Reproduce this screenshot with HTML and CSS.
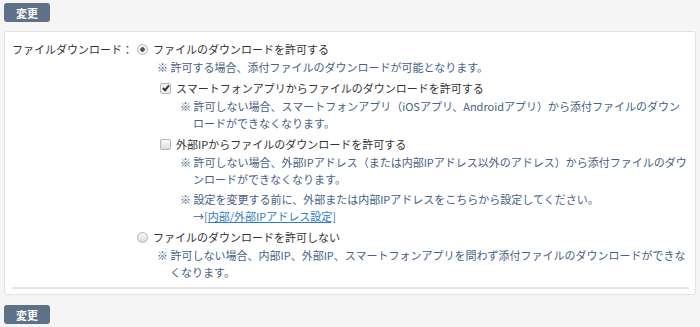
FILE: index.html
```html
<!DOCTYPE html>
<html lang="ja">
<head>
  <meta charset="UTF-8" />
  <title>ファイルダウンロード設定</title>
  <link rel="stylesheet" href="styles.css">
</head>
<body>
  <div class="actions">
    <button class="btn">変更</button>
  </div>

  <div class="panel">
    <div class="field">
      <div class="field-label">ファイルダウンロード：</div>
      <div class="field-body">
        <label class="opt"><span class="radio checked"></span>ファイルのダウンロードを許可する</label>
        <p class="note">※ 許可する場合、添付ファイルのダウンロードが可能となります。</p>

        <div class="sub">
          <label class="opt"><span class="check checked"></span>スマートフォンアプリからファイルのダウンロードを許可する</label>
          <p class="note">※ 許可しない場合、スマートフォンアプリ（iOSアプリ、Androidアプリ）から添付ファイルのダウンロードができなくなります。</p>

          <label class="opt"><span class="check"></span>外部IPからファイルのダウンロードを許可する</label>
          <p class="note">※ 許可しない場合、外部IPアドレス（または内部IPアドレス以外のアドレス）から添付ファイルのダウンロードができなくなります。</p>
          <p class="note">※ 設定を変更する前に、外部または内部IPアドレスをこちらから設定してください。<br>→<a href="#">[内部/外部IPアドレス設定]</a></p>
        </div>

        <label class="opt"><span class="radio"></span>ファイルのダウンロードを許可しない</label>
        <p class="note">※ 許可しない場合、内部IP、外部IP、スマートフォンアプリを問わず添付ファイルのダウンロードができなくなります。</p>
      </div>
    </div>
    <hr class="rule">
  </div>

  <div class="actions">
    <button class="btn">変更</button>
  </div>
</body>
</html>
```

FILE: styles.css
```css
body {
  margin: 0;
  padding: 3px 4px;
  background: #f5f5f5;
  color: #333;
  font-family: "Noto Sans CJK JP", "Noto Sans", sans-serif;
  font-size: 11px;
}
.actions {
  height: 20px;
}
.btn {
  width: 46px;
  height: 19px;
  padding: 0;
  border: none;
  border-radius: 3px;
  background: #5d7189;
  color: #fff;
  font-family: inherit;
  font-size: 11px;
  font-weight: bold;
}
.panel {
  margin: 8px 0 10px;
  padding: 8px 6px 5px 7px;
  background: #fff;
  border: 1px solid #e2e2e2;
  border-radius: 3px;
}
.field {
  display: flex;
}
.field-label {
  width: 125px;
  line-height: 19px;
}
.field-body {
  flex: 1;
}
.opt {
  display: flex;
  align-items: center;
  line-height: 19px;
}
.note {
  margin: 0 0 3px 20px;
  padding-left: 13px;
  text-indent: -13px;
  line-height: 17px;
  color: #466184;
}
.sub {
  padding-left: 23px;
}
.note a {
  color: #2f7dbf;
}
.radio, .check {
  flex: none;
  width: 9px;
  height: 9px;
  margin-right: 5px;
  border: 1px solid #b4b4b4;
  background: linear-gradient(#fafafa, #dcdcdc);
}
.radio {
  border-radius: 50%;
}
.radio.checked {
  background: radial-gradient(circle, #555 0 2px, #f2f2f2 2.5px);
}
.check {
  border-radius: 2px;
}
.check.checked {
  position: relative;
  background: #f0f0f0;
}
.check.checked::after {
  content: "";
  position: absolute;
  left: 3px;
  top: 0;
  width: 2px;
  height: 5px;
  border: solid #333;
  border-width: 0 2px 2px 0;
  transform: rotate(40deg);
}
.rule {
  margin: 3px 0 0;
  border: none;
  border-top: 2px solid #e3e6ea;
}
```
